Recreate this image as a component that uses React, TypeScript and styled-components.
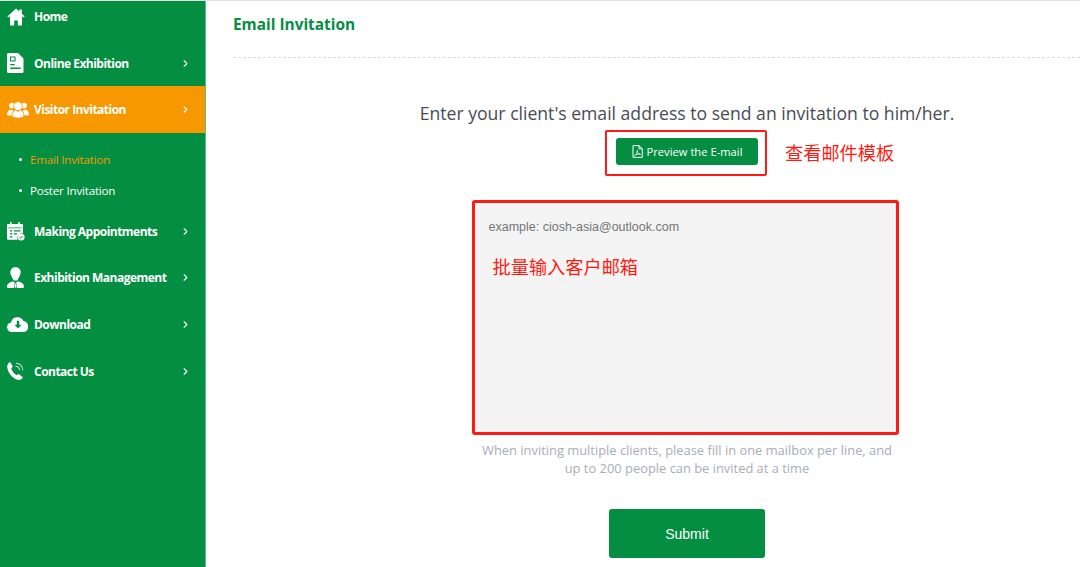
import React from 'react';
import styled, { createGlobalStyle } from 'styled-components';
import { ChevronRight } from 'lucide-react';

const GREEN = '#038e41';
const RED = '#ff1a12';

const GlobalStyle = createGlobalStyle`
html, body {
  margin: 0;
  padding: 0;
  background: #fff;
  font-family: "Open Sans", "Noto Sans", sans-serif;
}
`;

const HomeIcon = () => (
  <svg width="18" height="18" viewBox="0 0 18 18" fill="#fff">
    <path d="M9 .6 .4 8.4l.9 1.2L3 8.2v9.2h4.2v-5h3.600v5H15V8.200l1.700 1.400.9-1.200-2.800-2.600V1.400h-2.400v2.200z" />
  </svg>
);

const DocIcon = () => (
  <svg width="17" height="20" viewBox="0 0 17 20">
    <path fill="#fff" d="M1.500 0H11l5.500 5.500V18.500A1.500 1.500 0 0 1 15 20H1.500A1.500 1.500 0 0 1 0 18.500V1.500A1.500 1.500 0 0 1 1.500 0z" />
    <path fill="none" stroke={GREEN} strokeWidth="1.100" d="M3.500 4h4.500v4h-4.500z" />
    <path fill={GREEN} d="M3.200 11h4.500v1.200H3.200zM3.200 14.600h10.400v1.400H3.200z" />
  </svg>
);

const UsersIcon = () => (
  <svg width="22" height="17" viewBox="0 0 22 17" fill="#fff">
    <circle cx="5" cy="4.600" r="2.900" />
    <circle cx="17" cy="4.600" r="2.900" />
    <path d="M0 13.600c0-3 1.800-5 3.800-5.200l1.500 1.200 1-.7c-.6 1.300-.9 2.900-.9 5.500H1.600C.7 14.400 0 14.200 0 13.600zM22 13.600c0-3-1.800-5-3.800-5.200l-1.500 1.200-1-.7c.6 1.300.9 2.900.9 5.500h3.800c.9 0 1.600-.2 1.600-.8z" />
    <circle cx="11" cy="5.200" r="4.400" stroke="#f79800" strokeWidth="0.800" />
    <path stroke="#f79800" strokeWidth="0.800" d="M5 15c0-3.600 1.800-5.800 3.800-6.200L11 10.600l2.200-1.800c2 .4 3.800 2.600 3.800 6.200 0 1.200-2.600 2-6 2s-6-.8-6-2z" />
  </svg>
);

const CalendarIcon = () => (
  <svg width="18" height="19" viewBox="0 0 18 19">
    <path fill="#fff" d="M3 0h1.600v2h6.600V0h1.600v2H15a1 1 0 0 1 1 1v8.200a5 5 0 0 0-5.600 6.600H1a1 1 0 0 1-1-1V3a1 1 0 0 1 1-1h2z" />
    <path fill={GREEN} d="M1.400 5.400h13.200v.9H1.400zM3 8.200h2.400v1.300H3zM7 8.200h6.400v1.300H7zM3 11.200h2.400v1.300H3zM7 11.200h3v1.300H7zM3 14.200h2.400v1.300H3z" />
    <circle cx="14" cy="15" r="3.600" fill="#fff" />
    <path fill="none" stroke={GREEN} strokeWidth="1" d="M12.400 15l1.200 1.200 2-2.200" />
  </svg>
);

const PersonIcon = () => (
  <svg width="17" height="21" viewBox="0 0 17 21" fill="#fff">
    <path d="M8.500 0a5.200 5.200 0 0 1 5.200 5.200c0 3-2.600 6-3.400 8.200H6.700C5.900 11.200 3.300 8.200 3.300 5.200A5.200 5.200 0 0 1 8.500 0z" />
    <path d="M5.600 14.400 7.800 15.200 7 21H1.200C.4 21 0 20.400 0 19.800c0-3 2.600-4.800 5.600-5.400zM11.400 14.400l-2.200.8L10 21h5.800c.8 0 1.200-.6 1.200-1.200 0-3-2.600-4.800-5.600-5.400zM8.500 15.600l1 4.400-1 1-1-1z" />
  </svg>
);

const CloudIcon = () => (
  <svg width="22" height="16" viewBox="0 0 22 16">
    <path fill="#fff" d="M5 16a4.800 4.800 0 0 1-1-9.500A6.600 6.600 0 0 1 16.400 5a5.600 5.600 0 0 1 .4 11z" />
    <path fill={GREEN} d="M9.800 4.800h2.400v4h2.300L11 12.400 7.500 8.800h2.300z" />
  </svg>
);

const PhoneIcon = () => (
  <svg width="17" height="18" viewBox="0 0 17 18">
    <path fill="#fff" d="M3.400.4 5.600 4c.2.400.1.800-.2 1.100L4.200 6.200c.6 2.600 2.800 5.600 5.400 7l1.400-1c.4-.2.800-.2 1.100.1l3.400 2.800c.3.300.3.700.1 1-1 1.200-2.300 1.900-3.700 1.800C6 17.500.4 10.200.2 4.800.1 3 1 1.400 2.300.4c.4-.3.900-.3 1.100 0z" />
    <path fill="none" stroke="#fff" strokeOpacity="0.750" strokeWidth="1.100" d="M8.500 4.200a4.200 4.200 0 0 1 4 4M9 1.200a7 7 0 0 1 6.800 7" />
  </svg>
);

const PdfIcon = () => (
  <svg width="11" height="13" viewBox="0 0 11 13" fill="none" stroke="#fff" strokeWidth="1">
    <path d="M1 .6h6l3.300 3.200v8.600H1z" />
    <path d="M7 .6v3.200h3.300" />
    <path strokeWidth="0.800" d="M2.600 10.600c1.600-1 3-3.400 3-5.200-.8-.2-.4 2 .4 3 .6.800 1.800 1 2.600 1 0-.8-3.600-.8-6 1.200z" />
  </svg>
);

const NAV_TOP = [
  { label: 'Home', icon: <HomeIcon />, arrow: false },
  { label: 'Online Exhibition', icon: <DocIcon />, arrow: true },
];

const NAV_BOTTOM = [
  { label: 'Making Appointments', icon: <CalendarIcon /> },
  { label: 'Exhibition Management', icon: <PersonIcon /> },
  { label: 'Download', icon: <CloudIcon /> },
  { label: 'Contact Us', icon: <PhoneIcon /> },
];

function NavItem({ label, icon, arrow = true, active = false }: { label: string; icon: React.ReactNode; arrow?: boolean; active?: boolean }) {
  return (
    <NavRow $active={active}>
      <NavIcon>{icon}</NavIcon>
      <NavLabel>{label}</NavLabel>
      {arrow && <Arrow><ChevronRight size={11} strokeWidth={2.4} /></Arrow>}
    </NavRow>
  );
}

export default function App() {
  return (
    <Page>
      <GlobalStyle />
      <Sidebar>
        <NavItem {...NAV_TOP[0]} />
        <NavItem {...NAV_TOP[1]} />
        <NavItem label="Visitor Invitation" icon={<UsersIcon />} active />
        <SubMenu>
          <SubItem $current>Email Invitation</SubItem>
          <SubItem>Poster Invitation</SubItem>
        </SubMenu>
        {NAV_BOTTOM.map((item) => (
          <NavItem key={item.label} {...item} />
        ))}
      </Sidebar>
      <Main>
        <Header>
          <Title>Email Invitation</Title>
        </Header>
        <Form>
          <Lead>Enter your client's email address to send an invitation to him/her.</Lead>
          <PreviewBox>
            <PreviewButton><PdfIcon />Preview the E-mail</PreviewButton>
            <PreviewNote>查看邮件模板</PreviewNote>
          </PreviewBox>
          <AreaBox>
            <EmailArea placeholder="example: ciosh-asia@outlook.com" />
            <AreaNote>批量输入客户邮箱</AreaNote>
          </AreaBox>
          <Hint>
            When inviting multiple clients, please fill in one mailbox per line, and<br />
            up to 200 people can be invited at a time
          </Hint>
          <SubmitButton>Submit</SubmitButton>
        </Form>
      </Main>
    </Page>
  );
}

const Page = styled.div`
display: flex;
width: 1080px;
height: 567px;
overflow: hidden;
box-sizing: border-box;
border-top: 1px solid #dfe0e6;
`;

const Sidebar = styled.nav`
width: 206px;
flex-shrink: 0;
background: ${GREEN};
border-right: 1px solid #5dbb86;
box-sizing: border-box;
`;

const NavRow = styled.div<{ $active: boolean }>`
display: flex;
align-items: center;
height: 46.7px;
padding: 0 14px 0 7px;
box-sizing: border-box;
color: #fff;
background: ${(p) => (p.$active ? '#f79800' : 'transparent')};
&:first-child {
  height: 31px;
  margin-bottom: 7.7px;
}
`;

const NavIcon = styled.span`
display: flex;
align-items: center;
justify-content: flex-start;
width: 22px;
flex-shrink: 0;
margin-right: 5px;
`;

const NavLabel = styled.span`
flex: 1;
font-size: 12px;
font-weight: 700;
letter-spacing: -0.52px;
white-space: nowrap;
`;

const Arrow = styled.span`
display: flex;
color: #fff;
`;

const SubMenu = styled.ul`
list-style: none;
margin: 0;
padding: 10.5px 0 2.1px 19px;
`;

const SubItem = styled.li<{ $current?: boolean }>`
position: relative;
height: 31px;
line-height: 31px;
padding-left: 11px;
font-size: 11.6px;
letter-spacing: -0.2px;
color: ${(p) => (p.$current ? '#f09a08' : '#fff')};
&::before {
  content: "";
  position: absolute;
  left: 0;
  top: 14px;
  width: 3px;
  height: 3px;
  border-radius: 50%;
  background: #fff;
}
`;

const Main = styled.main`
flex: 1;
min-width: 0;
padding-left: 27px;
`;

const Header = styled.header`
height: 56px;
border-bottom: 1px dashed #dcdcdc;
box-sizing: content-box;
`;

const Title = styled.h1`
margin: 0;
padding-top: 13px;
font-size: 15.4px;
line-height: 22px;
font-weight: 700;
color: ${GREEN};
`;

const Form = styled.div`
display: flex;
flex-direction: column;
align-items: center;
margin-left: 61px;
`;

const Lead = styled.p`
margin: 44px 0 0;
font-size: 17.6px;
line-height: 22px;
color: #484c54;
white-space: nowrap;
`;

const PreviewBox = styled.div`
position: relative;
display: flex;
align-items: center;
justify-content: center;
width: 162px;
height: 46px;
margin: 6px 2px 0 0;
padding: 0 0 3px 2px;
box-sizing: border-box;
border: 2px solid ${RED};
border-radius: 2px;
`;

const PreviewButton = styled.button`
display: flex;
align-items: center;
justify-content: center;
gap: 4px;
width: 142px;
height: 27px;
padding: 0;
border: 0;
border-radius: 3px;
background: ${GREEN};
color: #fff;
font-family: "Open Sans", "Noto Sans", sans-serif;
font-size: 11.2px;
`;

const PreviewNote = styled.span`
position: absolute;
left: 178px;
top: 7px;
font-family: "Noto Sans CJK SC", sans-serif;
font-size: 18.2px;
line-height: 26px;
color: ${RED};
white-space: nowrap;
`;

const AreaBox = styled.div`
position: relative;
display: flex;
width: 427px;
height: 235px;
margin: 24px 4px 0 0;
box-sizing: border-box;
border: 3px solid ${RED};
border-radius: 3px;
`;

const EmailArea = styled.textarea`
flex: 1;
padding: 15px 14px;
border: 0;
outline: 0;
resize: none;
background: #f4f4f4;
font-family: "Liberation Sans", Arial, sans-serif;
font-size: 12.5px;
line-height: 18px;
&::placeholder {
  color: #757575;
  opacity: 1;
}
`;

const AreaNote = styled.span`
position: absolute;
left: 18px;
top: 51px;
font-family: "Noto Sans CJK SC", sans-serif;
font-size: 18.2px;
line-height: 24px;
color: ${RED};
white-space: nowrap;
`;

const Hint = styled.p`
margin: 6px 0 0;
font-size: 12.9px;
line-height: 18px;
text-align: center;
color: #aaadb7;
white-space: nowrap;
`;

const SubmitButton = styled.button`
width: 156px;
height: 49px;
margin-top: 32px;
padding: 0;
border: 0;
border-radius: 3px;
background: ${GREEN};
color: #fff;
font-family: "Liberation Sans", Arial, sans-serif;
font-size: 14px;
`;
